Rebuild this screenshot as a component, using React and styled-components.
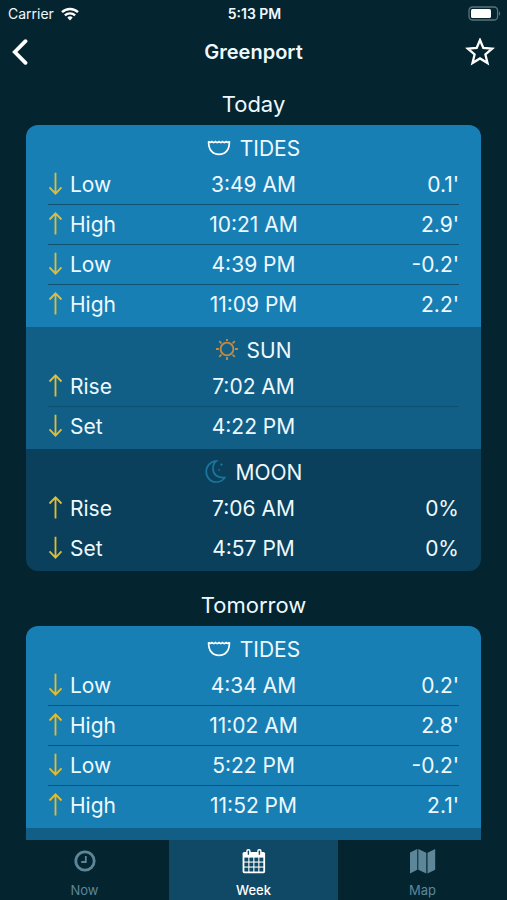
import React from 'react';
import styled, { createGlobalStyle } from 'styled-components';

const colors = {
	background: '#042430',
	tides: '#187fb5',
	sun: '#115f87',
	moon: '#0a405b',
	activeTab: '#0f4966',
	inactive: '#5d8799',
	text: '#eef9ff',
	arrow: '#e6bc2f'
};

const lines = {
	tides: 'rgba(4, 36, 48, 0.5)',
	sun: 'rgba(4, 36, 48, 0.25)',
	moon: 'transparent'
};

const GlobalStyle = createGlobalStyle`
	* {
		box-sizing: border-box;
	}
	body {
		margin: 0;
		background-color: ${colors.background};
		color: ${colors.text};
		font-family: Inter, 'Liberation Sans', sans-serif;
	}
	h1, h2, h3 {
		margin: 0;
	}
`;

const Screen = styled.div`
	display: flex;
	flex-direction: column;
	height: 100vh;
`;

const StatusBar = styled.div`
	display: grid;
	grid-template-columns: 1fr auto 1fr;
	align-items: center;
	flex: none;
	height: 27px;
	padding: 0 6px 0 8px;
	font-size: 14px;
`;

const Carrier = styled.span`
	display: flex;
	align-items: center;
	gap: 7px;
`;

const Clock = styled.span`
	font-weight: 600;
`;

const Battery = styled.svg`
	justify-self: end;
`;

const NavBar = styled.header`
	display: grid;
	grid-template-columns: 1fr auto 1fr;
	align-items: center;
	flex: none;
	height: 50px;
	padding: 0 12px;
`;

const NavTitle = styled.h1`
	font-size: 20px;
	font-weight: 600;
	line-height: 28px;
`;

const IconButton = styled.button`
	display: flex;
	justify-self: ${props => props.$side};
	padding: 0;
	border: 0;
	background: none;
	color: white;
	cursor: pointer;
`;

const DayList = styled.main`
	display: flex;
	flex: 1;
	flex-direction: column;
	gap: 20px;
	min-height: 0;
	padding: 13px 26px 20px;
	overflow-y: auto;
	scrollbar-width: none;
`;

const DayTitle = styled.h2`
	margin-bottom: 7px;
	font-size: 22px;
	font-weight: 400;
	line-height: 28px;
	text-align: center;
`;

const Card = styled.div`
	border-radius: 12px;
	overflow: hidden;
`;

const Section = styled.section`
	padding: 0 22px 3px;
	background-color: ${props => colors[props.$kind]};
`;

const SectionTitle = styled.h3`
	display: flex;
	align-items: center;
	justify-content: center;
	gap: 9px;
	height: 40px;
	padding-top: 6px;
	font-size: 21px;
	font-weight: 400;
`;

const Table = styled.table`
	width: 100%;
	border-collapse: separate;
	border-spacing: 0;
	table-layout: fixed;
	font-size: 21px;
	line-height: 39px;
`;

const Cell = styled.td`
	padding: 0;
	text-align: ${props => props.$align || 'left'};
	tr:not(:last-child) > & {
		border-bottom: 1px solid ${props => lines[props.$kind]};
	}
`;

const Label = styled.span`
	display: flex;
	align-items: center;
	gap: 7px;
	height: 39px;
`;

const TabBar = styled.nav`
	display: grid;
	grid-template-columns: repeat(3, 1fr);
	flex: none;
	height: 60px;
`;

const Tab = styled.a`
	display: flex;
	flex-direction: column;
	align-items: center;
	gap: 7px;
	padding-top: 7px;
	background-color: ${props => (props.$active ? colors.activeTab : 'transparent')};
	color: ${props => (props.$active ? 'white' : colors.inactive)};
	font-size: 13px;
	font-weight: ${props => (props.$active ? 500 : 400)};
	line-height: 16px;
	text-decoration: none;
`;

const WifiIcon = () => (
	<svg width='18' height='14' viewBox='0 0 18 14' fill='none' stroke='white' strokeWidth='2.4'>
		<path d='M1 5.2C5.4 .9 12.6 .9 17 5.2' />
		<path d='M3.9 8.4c2.800-2.700 7.400-2.700 10.200 0' />
		<path d='M6.300 10.600a3.900 3.900 0 0 1 5.400 0L9 13.400z' fill='white' stroke='none' />
	</svg>
);

const BatteryIcon = () => (
	<Battery width='33' height='16' viewBox='0 0 33 16'>
		<rect x='1' y='1' width='28.6' height='13' rx='3.6' fill='none' stroke='#5c727b' strokeWidth='1.3' />
		<rect x='3' y='3' width='20' height='9' rx='1.6' fill='white' />
		<path d='M31 5.4c1.6.7 1.6 3.6 0 4.3z' fill='#5c727b' />
	</Battery>
);

const BackIcon = () => (
	<svg width='16' height='26' viewBox='0 0 16 26' fill='none' stroke='currentColor' strokeWidth='3.8'>
		<path d='M13.5 2.2L2.8 13l10.7 10.8' strokeLinecap='round' />
	</svg>
);

const StarIcon = () => (
	<svg width='30' height='28' viewBox='0 0 30 28' fill='none' stroke='currentColor' strokeWidth='2.3'>
		<path d='M15 2l3.300 7.900 8.900.700-6.800 5.800 2.100 8.600-7.500-4.600L7.500 25l2.100-8.600-6.800-5.800 8.900-.700z' />
	</svg>
);

const ArrowIcon = ({ up }) => (
	<svg width='15' height='26' viewBox='0 0 15 26' fill='none' stroke={colors.arrow} strokeWidth='1.8'>
		{up ? <path d='M7.5 22.500V1.200M1.500 7.500l6-6.200 6 6.200' /> : <path d='M7.500 .8v21M1.500 15.400l6 6.200 6-6.200' />}
	</svg>
);

const TidesIcon = () => (
	<svg width='24' height='18' viewBox='0 0 24 18' fill='none' stroke='white' strokeWidth='1.7'>
		<path d='M1.600 2.400C1.400 10.400 5.400 15.400 12 15.400S22.600 10.400 22.400 2.400' />
		<path d='M1.400 2.300q1.800 2 3.500.4 1.800 1.600 3.600 0 1.800 1.600 3.500 0 1.800 1.600 3.500 0 1.800 1.600 3.600 0 1.800 1.600 3.500-.4' />
	</svg>
);

const SunIcon = () => (
	<svg width='22' height='22' viewBox='0 0 22 22' fill='none' stroke='#bd8b45' strokeWidth='1.9'>
		<circle cx='11' cy='10' r='6.400' />
		<path d='M11 -1v3M11 18v3M0 10h3M19 10h3M3.200 2.200l2.200 2.200M16.600 15.600l2.200 2.200M3.200 17.800l2.200-2.200M16.600 4.400l2.200-2.200' />
	</svg>
);

const MoonIcon = () => (
	<svg width='22' height='24' viewBox='0 0 22 24' fill='none' stroke='#1b769f' strokeWidth='1.7'>
		<path d='M11.200 1C5.400 1.400 1.200 5.900 1.200 11.600c0 6 4.400 10.400 10.200 10.400 3.600 0 6.600-1.600 8.400-4.400-7.300.8-11.800-3.400-11.800-9.200 0-3 1.100-5.600 3.200-7.400z' />
		<path d='M16.500 3.200v2.800M15.100 4.600h2.800M14 9v2M13 10h2' strokeWidth='.8' />
	</svg>
);

const NowIcon = () => (
	<svg width='28' height='28' viewBox='0 0 28 28' fill='none' stroke='currentColor'>
		<circle cx='14' cy='14' r='9.200' strokeWidth='2.800' />
		<path d='M14.800 9v6h-4.600' strokeWidth='1.800' />
	</svg>
);

const WeekIcon = () => (
	<svg width='28' height='28' viewBox='0 0 28 28'>
		<rect x='2.6' y='5' width='22.500' height='21.200' rx='1.600' fill='currentColor' />
		{[10.6, 15.6, 20.6].map(y =>
			[4.4, 9.4, 14.4, 19.4].map(x => (
				<rect key={`${x}-${y}`} x={x} y={y} width='3.900' height='3.900' fill={colors.activeTab} />
			))
		)}
		{[8.4, 19.4].map(x => (
			<React.Fragment key={x}>
				<rect x={x - 2.2} y='2' width='4.400' height='7' rx='2' fill='currentColor' />
				<rect x={x - 0.7} y='3.600' width='1.400' height='4.200' rx='.6' fill={colors.activeTab} />
			</React.Fragment>
		))}
	</svg>
);

const MapIcon = () => (
	<svg width='28' height='28' viewBox='0 0 28 28' fill='currentColor'>
		<path d='M1 5.500L8.300 2v20.800L1 26.500zM9.300 2l8 3.800v20.700l-8-3.700zM18.500 5.800L26.200 2v20.800l-7.700 3.700z' />
	</svg>
);

const sectionIcons = { tides: TidesIcon, sun: SunIcon, moon: MoonIcon };

const days = [
	{
		title: 'Today',
		sections: [
			{
				kind: 'tides',
				rows: [
					['Low', '3:49 AM', "0.1'"],
					['High', '10:21 AM', "2.9'"],
					['Low', '4:39 PM', "-0.2'"],
					['High', '11:09 PM', "2.2'"]
				]
			},
			{ kind: 'sun', rows: [['Rise', '7:02 AM', ''], ['Set', '4:22 PM', '']] },
			{ kind: 'moon', rows: [['Rise', '7:06 AM', '0%'], ['Set', '4:57 PM', '0%']] }
		]
	},
	{
		title: 'Tomorrow',
		sections: [
			{
				kind: 'tides',
				rows: [
					['Low', '4:34 AM', "0.2'"],
					['High', '11:02 AM', "2.8'"],
					['Low', '5:22 PM', "-0.2'"],
					['High', '11:52 PM', "2.1'"]
				]
			},
			{ kind: 'sun', rows: [] }
		]
	}
];

const DaySection = ({ kind, rows }) => {
	const Icon = sectionIcons[kind];
	return (
		<Section $kind={kind}>
			<SectionTitle>
				<Icon />
				{kind.toUpperCase()}
			</SectionTitle>
			{rows.length > 0 && (
				<Table>
					<tbody>
						{rows.map(([label, time, value]) => (
							<tr key={time}>
								<Cell $kind={kind}>
									<Label>
										<ArrowIcon up={label === 'High' || label === 'Rise'} />
										{label}
									</Label>
								</Cell>
								<Cell $kind={kind} $align='center'>
									{time}
								</Cell>
								<Cell $kind={kind} $align='right'>
									{value}
								</Cell>
							</tr>
						))}
					</tbody>
				</Table>
			)}
		</Section>
	);
};

const App = () => (
	<Screen>
		<GlobalStyle />
		<StatusBar>
			<Carrier>
				Carrier
				<WifiIcon />
			</Carrier>
			<Clock>5:13 PM</Clock>
			<BatteryIcon />
		</StatusBar>
		<NavBar>
			<IconButton $side='start' aria-label='Back'>
				<BackIcon />
			</IconButton>
			<NavTitle>Greenport</NavTitle>
			<IconButton $side='end' aria-label='Favorite'>
				<StarIcon />
			</IconButton>
		</NavBar>
		<DayList>
			{days.map(day => (
				<section key={day.title}>
					<DayTitle>{day.title}</DayTitle>
					<Card>
						{day.sections.map(section => (
							<DaySection key={section.kind} {...section} />
						))}
					</Card>
				</section>
			))}
		</DayList>
		<TabBar>
			<Tab href='#now'>
				<NowIcon />
				Now
			</Tab>
			<Tab href='#week' $active>
				<WeekIcon />
				Week
			</Tab>
			<Tab href='#map'>
				<MapIcon />
				Map
			</Tab>
		</TabBar>
	</Screen>
);

export default App;
